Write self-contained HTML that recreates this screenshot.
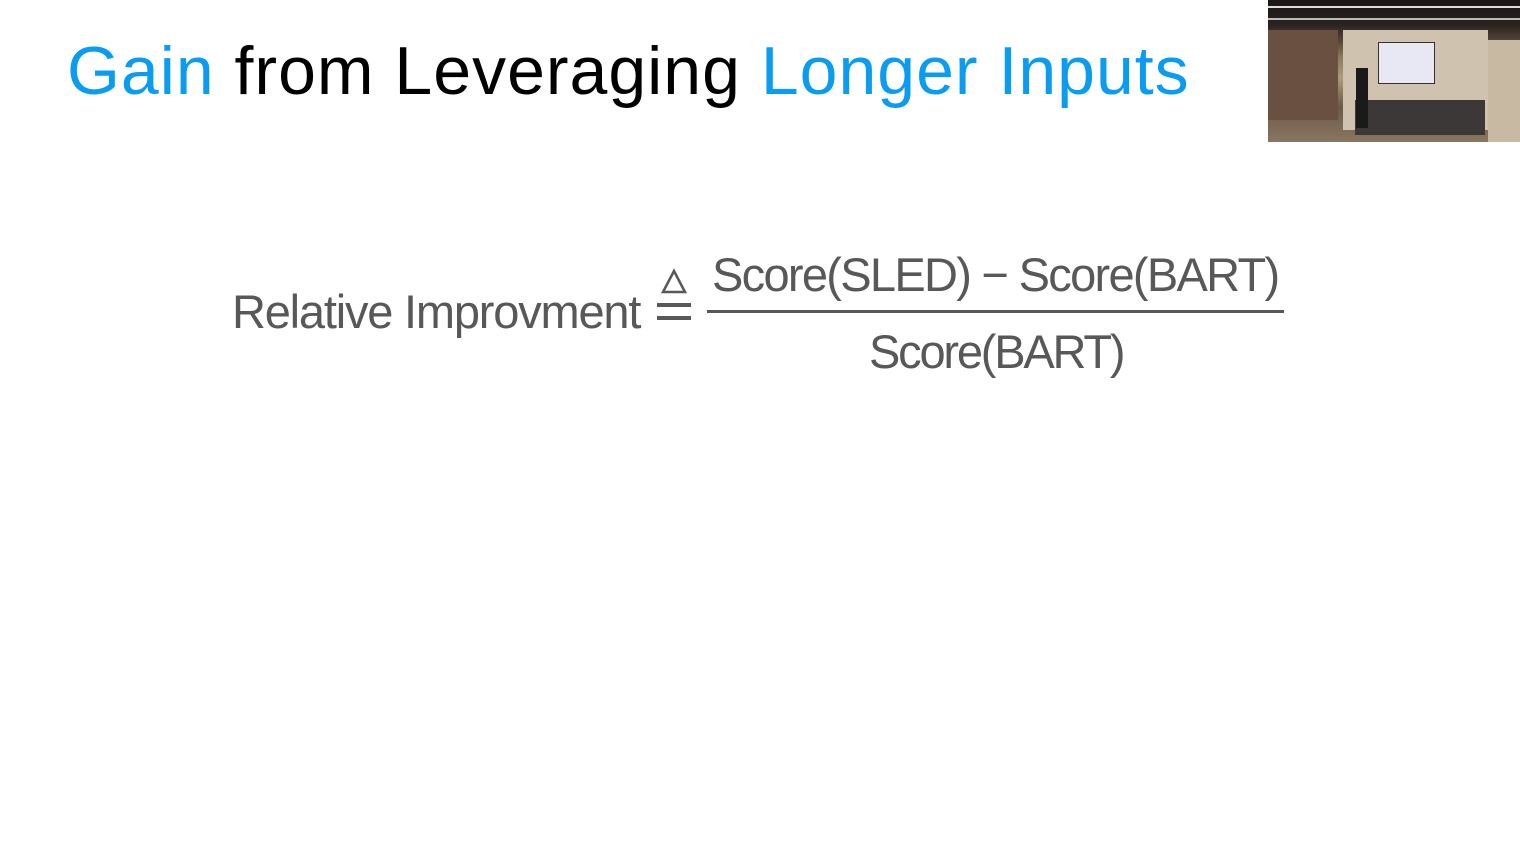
<!DOCTYPE html>
<html><head><meta charset="utf-8"><style>
body{margin:0;width:1520px;height:857px;background:#fff;position:relative;overflow:hidden;font-family:"Liberation Sans",sans-serif}
.t{position:absolute;white-space:nowrap;line-height:1}
.g{color:#585858;font-size:47px}
</style></head><body>
<div class="t" style="left:67px;top:37px;font-size:68px;color:#000;letter-spacing:1px"><span style="color:#0a9cf0">Gain</span> from Leveraging <span style="color:#0a9cf0">Longer Inputs</span></div>
<div class="t g" style="left:232px;top:288px;letter-spacing:-1.2px">Relative Improvment</div>
<svg style="position:absolute;left:655px;top:266px" width="40" height="60"><path d="M19 5 L8 26 L30 26 Z" fill="none" stroke="#585858" stroke-width="2.5"/><rect x="2" y="37" width="34" height="4" fill="#585858"/><rect x="2" y="50" width="34" height="4" fill="#585858"/></svg>
<div class="t g" style="left:712px;top:251px;letter-spacing:-1.7px">Score(SLED) − Score(BART)</div>
<div style="position:absolute;left:707px;top:310px;width:577px;height:3px;background:#585858"></div>
<div class="t g" style="left:869px;top:328px;letter-spacing:-2.2px">Score(BART)</div>
<div style="position:absolute;left:1268px;top:0;width:252px;height:142px;background:linear-gradient(#1a1616 0,#2a2420 18%,#5a4a3a 30%,#8a7a60 40%,#b09a7a 55%,#6a5a4a 75%,#8a7660 100%);overflow:hidden">
<div style="position:absolute;left:0;top:6px;width:252px;height:2px;background:#ddd"></div>
<div style="position:absolute;left:0;top:18px;width:252px;height:2px;background:#bbb"></div>
<div style="position:absolute;left:75px;top:30px;width:145px;height:100px;background:#cfc3b0"></div>
<div style="position:absolute;left:0;top:30px;width:70px;height:90px;background:#6a5040"></div>
<div style="position:absolute;left:220px;top:40px;width:32px;height:102px;background:#c8b9a2"></div>
<div style="position:absolute;left:110px;top:42px;width:55px;height:40px;background:#e8e8f4;border:1px solid #333"></div>
<div style="position:absolute;left:87px;top:100px;width:130px;height:35px;background:#3c3838"></div>
<div style="position:absolute;left:88px;top:68px;width:12px;height:60px;background:#1a1a1a"></div>
</div>
</body></html>
